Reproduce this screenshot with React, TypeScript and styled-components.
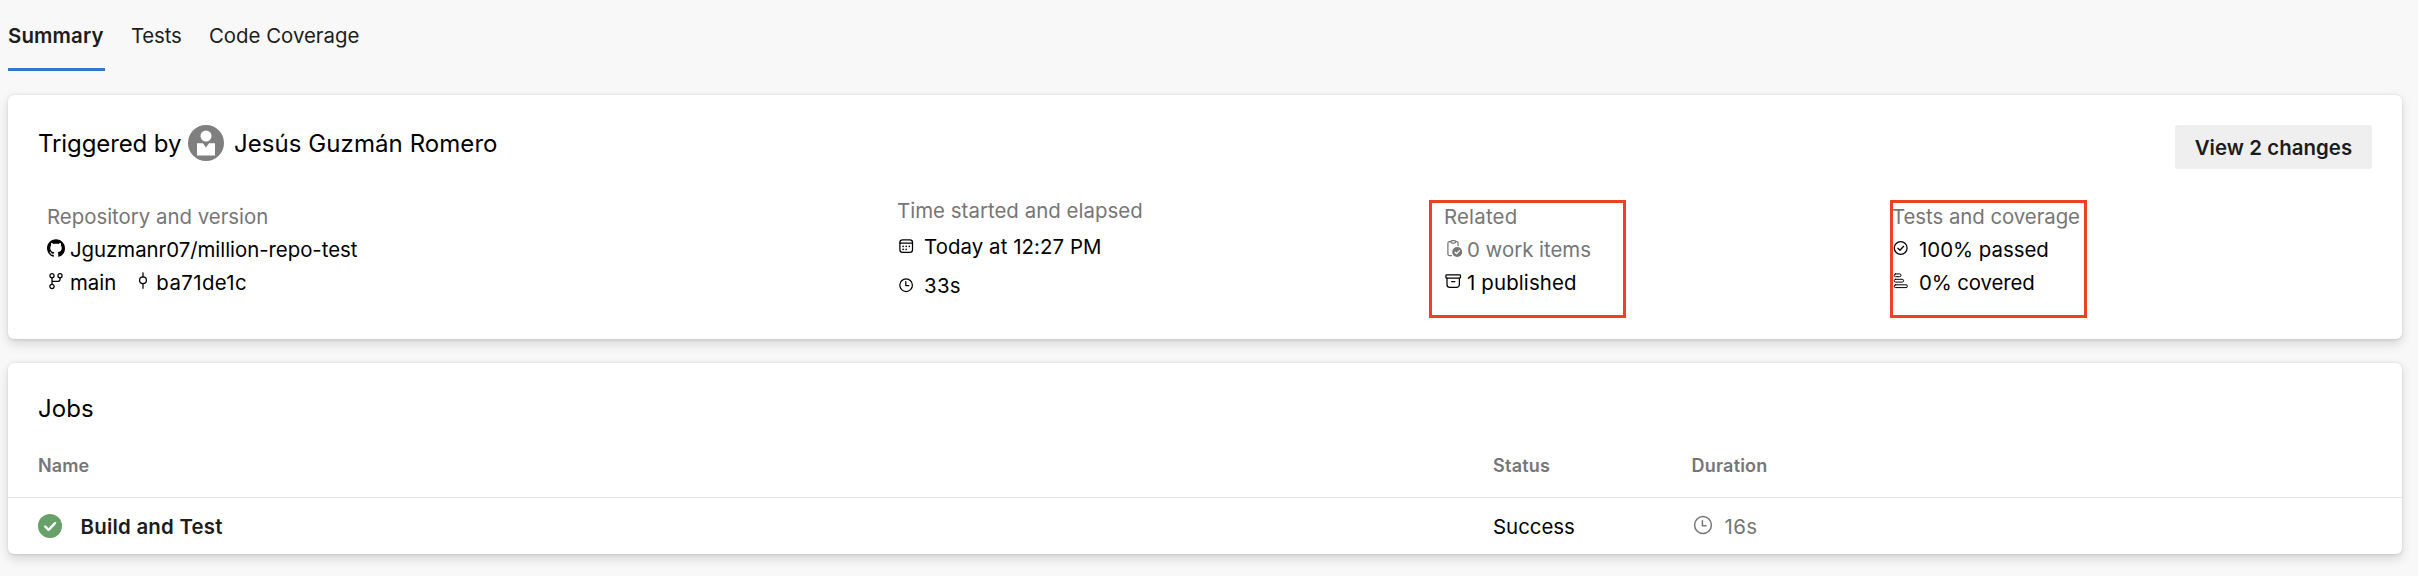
import React from 'react';
import styled, { createGlobalStyle } from 'styled-components';

const GlobalStyle = createGlobalStyle`
  *, *::before, *::after { box-sizing: border-box; }
  body {
    margin: 0;
    background: #f8f8f8;
    color: #000;
    font-family: Inter, "Liberation Sans", sans-serif;
    font-size: 20.4px;
  }
`;

const Page = styled.main`
  min-height: 576px;
  padding: 0 16px 22px 8px;
  display: flex;
  flex-direction: column;
`;

const Label = styled.span<{ $track?: number }>`
  letter-spacing: ${(p) => p.$track ?? 0}px;
  white-space: nowrap;
`;

const Tabs = styled.nav`
  display: flex;
  gap: 26px;
  height: 71px;
  margin-bottom: 24px;
`;

const Tab = styled.a<{ $active?: boolean }>`
  height: 71px;
  line-height: 71px;
  padding-right: 1.3px;
  color: #1c1c1c;
  font-weight: ${(p) => (p.$active ? 600 : 400)};
  box-shadow: ${(p) => (p.$active ? 'inset 0 -3px #3176cf' : 'none')};
`;

const Card = styled.section<{ $height: number }>`
  height: ${(p) => p.$height}px;
  background: #fff;
  border-radius: 6px;
  box-shadow: 0 4.8px 10.8px rgba(0, 0, 0, 0.132), 0 0.9px 2.7px rgba(0, 0, 0, 0.108);
  & + & { margin-top: 24px; }
`;

const CardHeader = styled.header`
  display: flex;
  justify-content: space-between;
  align-items: flex-start;
  padding: 30px 30px 0 30px;
`;

const Title = styled.h2`
  display: flex;
  margin: 0;
  height: 38px;
  line-height: 38px;
  font-size: 24px;
  font-weight: 400;
`;

const Avatar = styled.svg`
  width: 36px;
  height: 36px;
  margin: 0 10px 0 6.6px;
`;

const Button = styled.button`
  width: 197px;
  height: 44px;
  padding: 0;
  border: 0;
  border-radius: 3px;
  background: #efefef;
  color: #1c1c1c;
  font: 600 20.4px Inter, sans-serif;
`;

const Facts = styled.div`
  display: grid;
  grid-template-columns: 850px 547px 449px 1fr;
  padding: 25px 0 0 39px;
`;

const Column = styled.div<{ $offset?: number; $row: number }>`
  position: relative;
  margin-top: ${(p) => p.$offset ?? 0}px;
  display: grid;
  grid-template-rows: 33px ${(p) => p.$row}px ${(p) => p.$row}px;
`;

const ColumnTitle = styled.div<{ $outdent?: boolean }>`
  margin-left: ${(p) => (p.$outdent ? -1 : 0)}px;
  line-height: 33px;
  color: #767676;
`;

const Fact = styled.div<{ $gap: number; $muted?: boolean }>`
  display: flex;
  align-items: center;
  gap: ${(p) => p.$gap}px;
  color: ${(p) => (p.$muted ? '#767676' : '#000')};
`;

const Pair = styled.div`
  display: flex;
  gap: 20px;
`;

const Icon = styled.svg<{ $stroke?: number }>`
  flex: none;
  display: block;
  overflow: visible;
  fill: none;
  stroke: currentColor;
  stroke-width: ${(p) => p.$stroke ?? 1.25};
  stroke-linecap: round;
  stroke-linejoin: round;
`;

const Highlight = styled.div<{ $left: number }>`
  position: absolute;
  top: 0;
  left: ${(p) => p.$left}px;
  width: 197px;
  height: 118px;
  border: 3px solid #ee4124;
`;

const JobsTitle = styled.h2`
  margin: 0;
  padding: 30px 0 9px 30px;
  font-size: 24px;
  font-weight: 400;
  line-height: 32px;
`;

const TableRow = styled.div<{ $head?: boolean }>`
  display: grid;
  grid-template-columns: 1455px 198.5px 1fr;
  align-items: center;
  padding-left: 30px;
  height: ${(p) => (p.$head ? 64 : 56)}px;
  border-bottom: ${(p) => (p.$head ? '1px solid #e4e4e4' : '0')};
  color: ${(p) => (p.$head ? '#767676' : '#1c1c1c')};
  font-size: ${(p) => (p.$head ? 18 : 20.4)}px;
  font-weight: ${(p) => (p.$head ? 600 : 400)};
`;

const JobName = styled.div`
  display: flex;
  align-items: center;
  gap: 18.5px;
  font-weight: 600;
`;

const Status = styled.div`
  color: #000;
`;

const Duration = styled.div`
  display: flex;
  align-items: center;
  gap: 13px;
  padding-left: 2px;
  color: #767676;
`;

const AvatarIcon = () => (
  <Avatar viewBox="0 0 36 36">
    <circle cx="18" cy="18" r="18" fill="#7f7f7f" />
    <circle cx="18" cy="11" r="5.5" fill="#fff" />
    <path d="M9 18.2h5.9l3.1 4.4 3.1-4.4H27v12.3H9z" fill="#fff" />
  </Avatar>
);

const GitHubIcon = () => (
  <Icon width="18" height="33" viewBox="0 0 18 33">
    <g transform="translate(0 6.3) scale(1.125)" fill="currentColor" stroke="none">
      <path d="M8 0C3.58 0 0 3.58 0 8c0 3.54 2.29 6.53 5.47 7.59.4.07.55-.17.55-.38 0-.19-.01-.82-.01-1.49-2.01.37-2.53-.49-2.69-.94-.09-.23-.48-.94-.82-1.13-.28-.15-.68-.52-.01-.53.63-.01 1.08.58 1.23.82.72 1.21 1.87.87 2.33.66.07-.52.28-.87.51-1.07-1.78-.2-3.64-.89-3.64-3.95 0-.87.31-1.59.82-2.15-.08-.2-.36-1.02.08-2.12 0 0 .67-.21 2.2.82.64-.18 1.32-.27 2-.27s1.36.09 2 .27c1.53-1.04 2.2-.82 2.2-.82.44 1.1.16 1.92.08 2.12.51.56.82 1.27.82 2.15 0 3.07-1.87 3.75-3.65 3.95.29.25.54.73.54 1.48 0 1.07-.01 1.93-.01 2.2 0 .21.15.46.55.38A8.01 8.01 0 0 0 16 8c0-4.42-3.58-8-8-8z" />
    </g>
  </Icon>
);

const BranchIcon = () => (
  <Icon width="18" height="33" viewBox="0 0 18 33">
    <circle cx="5" cy="9.7" r="2.1" />
    <circle cx="13" cy="9.7" r="2.1" />
    <circle cx="5" cy="20.5" r="2.1" />
    <path d="M5 11.8v6.6M13 11.8v1.4q0 2.2-2.2 2.2H5" />
  </Icon>
);

const CommitIcon = () => (
  <Icon width="14" height="33" viewBox="0 0 14 33">
    <circle cx="7" cy="14.3" r="3.4" />
    <path d="M7 6.8v4.1M7 17.7v4.6" />
  </Icon>
);

const CalendarIcon = () => (
  <Icon width="18" height="39" viewBox="0 0 18 39">
    <rect x="2.9" y="12.8" width="12.6" height="12.6" rx="2.6" />
    <path d="M2.9 16.2h12.6" />
    <g fill="currentColor" stroke="none">
      <circle cx="6.1" cy="19.3" r=".85" />
      <circle cx="9.2" cy="19.3" r=".85" />
      <circle cx="12.3" cy="19.3" r=".85" />
      <circle cx="6.1" cy="22.3" r=".85" />
      <circle cx="9.2" cy="22.3" r=".85" />
    </g>
  </Icon>
);

const ClockIcon = () => (
  <Icon width="18" height="39" viewBox="0 0 18 39">
    <circle cx="9.1" cy="19.2" r="6.3" />
    <path d="M8.8 15.6v4h3" />
  </Icon>
);

const LargeClockIcon = () => (
  <Icon width="18" height="18" viewBox="0 0 18 18" $stroke={1.5}>
    <circle cx="9" cy="8" r="8.4" />
    <path d="M8.4 3.8v5h3.6" />
  </Icon>
);

const WorkItemIcon = () => (
  <Icon width="18" height="33" viewBox="0 0 18 33">
    <path d="M7.5 22.6H5.4a1.5 1.5 0 0 1-1.5-1.5V10.2a1.5 1.5 0 0 1 1.5-1.5h1.4M11.6 8.7h1a1.5 1.5 0 0 1 1.5 1.5v2.4" />
    <rect x="6.8" y="7.6" width="4.8" height="2.4" rx="1.2" />
    <circle cx="13.2" cy="19" r="5" fill="currentColor" stroke="none" />
    <path d="M11 19.2l1.5 1.5 3-3.1" stroke="#fff" />
  </Icon>
);

const ArchiveIcon = () => (
  <Icon width="18" height="33" viewBox="0 0 18 33">
    <rect x="1.9" y="8.9" width="14.6" height="3.2" rx=".8" />
    <path d="M3 12.1v6.4a2.9 2.9 0 0 0 2.9 2.9h6.6a2.9 2.9 0 0 0 2.9-2.9v-6.4M7.6 15.5h3.2" />
  </Icon>
);

const CheckCircleIcon = () => (
  <Icon width="18" height="33" viewBox="0 0 18 33">
    <circle cx="7.7" cy="15" r="6.4" />
    <path d="M4.9 15.3l2 2 3.8-4" />
  </Icon>
);

const BarsIcon = () => (
  <Icon width="18" height="33" viewBox="0 0 18 33" $stroke={1}>
    <rect x="1.2" y="7.9" width="6.8" height="2.8" rx="1.4" />
    <rect x="1.2" y="13.3" width="9.4" height="2.8" rx="1.4" />
    <rect x="1.2" y="18.8" width="13.2" height="2.8" rx="1.4" />
  </Icon>
);

const SuccessIcon = () => (
  <Icon width="24" height="24" viewBox="0 0 24 24" $stroke={2.4}>
    <circle cx="12" cy="12" r="12" fill="#67a069" stroke="none" />
    <path d="M7.2 12.5l3.4 3.3 6.5-6.6" stroke="#fff" />
  </Icon>
);

export default function App() {
  return (
    <>
      <GlobalStyle />
      <Page>
        <Tabs>
          <Tab $active><Label $track={0.15}>Summary</Label></Tab>
          <Tab><Label $track={-0.15}>Tests</Label></Tab>
          <Tab><Label>Code Coverage</Label></Tab>
        </Tabs>

        <Card $height={244}>
          <CardHeader>
            <Title>
              <Label $track={-0.1}>Triggered by</Label>
              <AvatarIcon />
              <Label $track={0.07}>Jesús Guzmán Romero</Label>
            </Title>
            <Button><Label $track={0.07}>View 2 changes</Label></Button>
          </CardHeader>
          <Facts>
            <Column $row={33} $offset={6}>
              <ColumnTitle><Label>Repository and version</Label></ColumnTitle>
              <Fact $gap={5}>
                <GitHubIcon />
                <Label $track={-0.03}>Jguzmanr07/million-repo-test</Label>
              </Fact>
              <Pair>
                <Fact $gap={5}>
                  <BranchIcon />
                  <Label>main</Label>
                </Fact>
                <Fact $gap={6}>
                  <CommitIcon />
                  <Label $track={0.4}>ba71de1c</Label>
                </Fact>
              </Pair>
            </Column>
            <Column $row={39}>
              <ColumnTitle><Label $track={0.04}>Time started and elapsed</Label></ColumnTitle>
              <Fact $gap={9}>
                <CalendarIcon />
                <Label $track={0.08}>Today at 12:27 PM</Label>
              </Fact>
              <Fact $gap={9}>
                <ClockIcon />
                <Label $track={0.3}>33s</Label>
              </Fact>
            </Column>
            <Column $row={33} $offset={6}>
              <ColumnTitle><Label $track={0.2}>Related</Label></ColumnTitle>
              <Fact $gap={5} $muted>
                <WorkItemIcon />
                <Label>0 work items</Label>
              </Fact>
              <Fact $gap={5}>
                <ArchiveIcon />
                <Label $track={0.14}>1 published</Label>
              </Fact>
              <Highlight $left={-15} />
            </Column>
            <Column $row={33} $offset={6}>
              <ColumnTitle $outdent><Label $track={-0.05}>Tests and coverage</Label></ColumnTitle>
              <Fact $gap={8}>
                <CheckCircleIcon />
                <Label>100% passed</Label>
              </Fact>
              <Fact $gap={8}>
                <BarsIcon />
                <Label $track={-0.1}>0% covered</Label>
              </Fact>
              <Highlight $left={-3} />
            </Column>
          </Facts>
        </Card>

        <Card $height={191}>
          <JobsTitle><Label $track={0.1}>Jobs</Label></JobsTitle>
          <TableRow $head>
            <Label $track={0.07}>Name</Label>
            <Label $track={0.25}>Status</Label>
            <Label $track={0.2}>Duration</Label>
          </TableRow>
          <TableRow>
            <JobName>
              <SuccessIcon />
              <Label $track={0.24}>Build and Test</Label>
            </JobName>
            <Status><Label>Success</Label></Status>
            <Duration>
              <LargeClockIcon />
              <Label $track={0.4}>16s</Label>
            </Duration>
          </TableRow>
        </Card>
      </Page>
    </>
  );
}
